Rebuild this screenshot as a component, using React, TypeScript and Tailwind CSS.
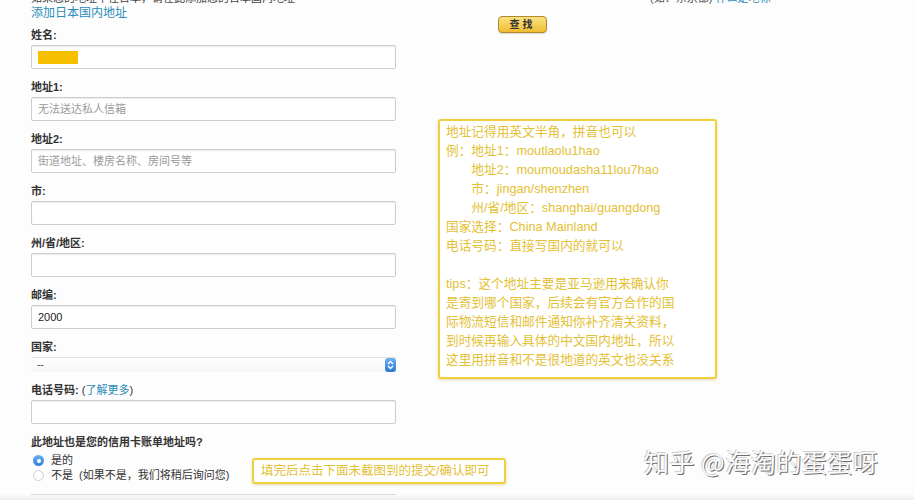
import React from 'react'

function Field({ label, children }: { label: React.ReactNode; children?: React.ReactNode }) {
  return (
    <div className="mb-[10px]">
      <div className="h-4 mb-[2px] text-[11px] leading-4 font-bold text-[#333]">{label}</div>
      <div className="h-6 w-[365px] rounded-[2px] border border-[#cdcdcd] bg-white shadow-[inset_0_1px_1px_rgba(0,0,0,0.08)] flex items-center px-[6px] text-[11px] text-[#222]">
        {children}
      </div>
    </div>
  )
}

function Placeholder({ text }: { text: string }) {
  return <span className="text-[#9a9a9a]">{text}</span>
}

function Radio({ checked }: { checked: boolean }) {
  return checked ? (
    <span className="w-[11px] h-[11px] rounded-full bg-gradient-to-b from-[#6aaef0] to-[#2f7fd9] flex items-center justify-center">
      <span className="w-[4px] h-[4px] rounded-full bg-white" />
    </span>
  ) : (
    <span className="w-[11px] h-[11px] rounded-full border border-[#cfcfcf] bg-white" />
  )
}

export default function App() {
  const noteLines = [
    '地址记得用英文半角，拼音也可以',
    '例：地址1：moutlaolu1hao',
    '　　地址2：moumoudasha11lou7hao',
    '　　市：jingan/shenzhen',
    '　　州/省/地区：shanghai/guangdong',
    '国家选择：China Mainland',
    '电话号码：直接写国内的就可以',
    '',
    'tips：这个地址主要是亚马逊用来确认你',
    '是寄到哪个国家，后续会有官方合作的国',
    '际物流短信和邮件通知你补齐清关资料，',
    '到时候再输入具体的中文国内地址，所以',
    '这里用拼音和不是很地道的英文也没关系',
  ]

  return (
    <div className="relative w-[914px] h-[500px] overflow-hidden bg-[#fdfdfd] font-['Liberation_Sans','Noto_Sans_CJK_SC',sans-serif] flex">
      {/* Left: address form */}
      <div className="w-[396px] pl-[31px] shrink-0">
        <div className="mt-[-10px] h-4 text-[11px] leading-4 text-[#444] whitespace-nowrap">如果您的地址不在日本，请在此添加您的日本国内地址</div>
        <div className="h-4 mt-[-1px] text-[12px] leading-4 text-[#2b8cb9]">添加日本国内地址</div>
        <div className="h-[6px]" />

        <Field label="姓名:">
          <span className="w-10 h-[13px] bg-[#f6c000]" />
        </Field>
        <Field label="地址1:"><Placeholder text="无法送达私人信箱" /></Field>
        <Field label="地址2:"><Placeholder text="街道地址、楼房名称、房间号等" /></Field>
        <Field label="市:" />
        <Field label="州/省/地区:" />
        <Field label="邮编:">2000</Field>

        {/* Country select */}
        <div className="mb-[10px]">
          <div className="h-4 mb-[2px] text-[11px] leading-4 font-bold text-[#333]">国家:</div>
          <div className="h-[15px] w-[365px] flex items-center justify-between border-t border-[#e2e2e2] bg-gradient-to-b from-white to-[#f6f6f6] pl-[6px]">
            <span className="text-[10px] text-[#444] leading-none">--</span>
            <span className="w-[11px] h-[14px] rounded-[3px] bg-gradient-to-b from-[#6db2f2] to-[#2b78d4] flex items-center justify-center">
              <svg width="7" height="10" viewBox="0 0 7 10" fill="none" stroke="white" strokeWidth="1.3">
                <path d="M1 4 L3.5 1.5 L6 4" />
                <path d="M1 6 L3.5 8.5 L6 6" />
              </svg>
            </span>
          </div>
        </div>

        <Field label={<span>电话号码: <span className="font-normal">(</span><span className="font-normal text-[#2b8cb9]">了解更多</span><span className="font-normal">)</span></span>} />

        <div className="h-4 text-[11px] leading-4 font-bold text-[#333]">此地址也是您的信用卡账单地址吗?</div>
        <div className="h-[15px] mt-[3px] flex items-center gap-[7px] pl-[2px] text-[11px] text-[#333]">
          <Radio checked />
          <span>是的</span>
        </div>
        <div className="h-[15px] flex items-center gap-[7px] pl-[2px] text-[11px] text-[#333]">
          <Radio checked={false} />
          <span>不是&nbsp;&nbsp;(如果不是，我们将稍后询问您)</span>
        </div>
        <div className="mt-[11px] w-[365px] h-px bg-[#d6d6d6]" />
      </div>

      {/* Right: search button and note */}
      <div className="flex-1 flex flex-col items-start">
        <div className="mt-[-10px] ml-[254px] h-4 text-[11px] leading-4 text-[#555] whitespace-nowrap">
          (如：东京都) <span className="text-[#2b8cb9]">什么是地标</span>
        </div>
        <button className="mt-[10px] ml-[102px] w-[49px] h-[17px] rounded-[4px] border border-[#b08a2a] bg-gradient-to-b from-[#fbe27e] to-[#efbd2f] text-[10px] leading-none font-bold text-[#333] tracking-[3px] shadow-[0_1px_1px_rgba(0,0,0,0.15)]">
          查找
        </button>
        <div className="mt-[86px] ml-[42px] w-[279px] h-[260px] rounded-[3px] border-2 border-[#f1d040] bg-white pl-[6px] pt-[2px] shadow-[0_1px_3px_rgba(180,150,40,0.35)]">
          {noteLines.map((l, i) => (
            <div key={i} className="h-[19px] leading-[19px] text-[12.7px] text-[#e4c034] whitespace-nowrap">{l}</div>
          ))}
        </div>
      </div>

      {/* Bottom annotation */}
      <div className="absolute left-[252px] top-[458px] w-[254px] h-[26px] rounded-[3px] border-2 border-[#f1d040] bg-white pl-[7px] flex items-center text-[12.5px] text-[#e4c034] whitespace-nowrap shadow-[0_1px_3px_rgba(180,150,40,0.35)]">
        填完后点击下面未截图到的提交/确认即可
      </div>

      {/* Watermark */}
      <div className="absolute left-[644px] top-[445px] text-[25px] leading-[32px] tracking-[0.5px] text-[#fbfbfb] whitespace-nowrap [text-shadow:1px_1px_0_#6e6e6e,-1px_-1px_0_#cfcfcf] font-['Noto_Sans_CJK_SC',sans-serif]">
        知乎 @海淘的蛋蛋呀
      </div>

      {/* bottom edge shade */}
      <div className="absolute left-0 right-0 bottom-0 h-[6px] bg-gradient-to-b from-transparent to-[#ececec]" />
    </div>
  )
}
